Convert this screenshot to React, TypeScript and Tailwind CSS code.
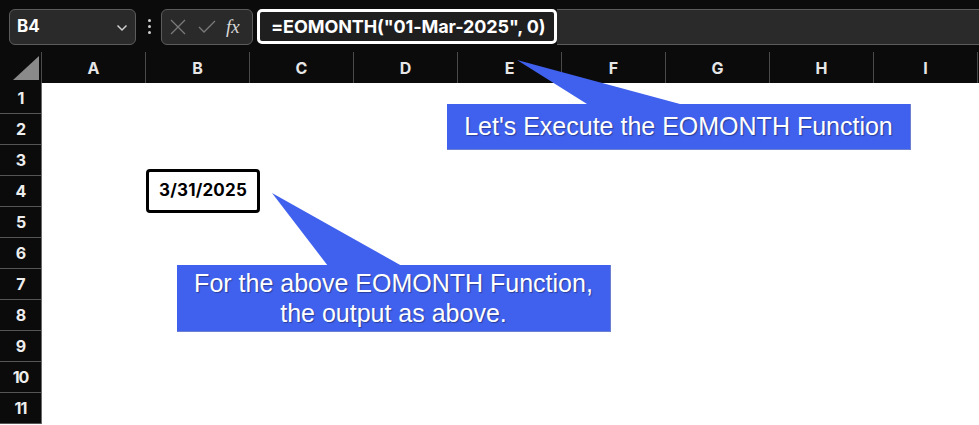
import React from "react";

const cols = ["A", "B", "C", "D", "E", "F", "G", "H", "I"];
const rows = [1, 2, 3, 4, 5, 6, 7, 8, 9, 10, 11];

const hdrFont = { fontFamily: "Inter, 'Open Sans', sans-serif" };
const calloutFont = {
  fontFamily: "'Liberation Sans', Arial, sans-serif",
  textShadow: "1px 1px 1px rgba(0,0,0,0.35)",
};

export default function App() {
  return (
    <div
      className="relative w-[979px] h-[425px] overflow-hidden bg-white"
      style={hdrFont}
    >
      {/* toolbar */}
      <div className="flex items-center h-[52px] bg-[#0b0b0b] pl-[9px] pt-[1px]">
        <div className="flex items-center justify-between w-[127px] h-[36px] rounded-[6px] border border-[#5c5c5c] bg-[#2a2a2a] pl-[7px] pr-[7px]">
          <span className="text-white font-bold text-[17px]">B4</span>
          <svg width="12" height="8" viewBox="0 0 12 8" className="mt-[2px]">
            <path d="M1.5 1.5 L6 6 L10.5 1.5" stroke="#d0d0d0" strokeWidth="1.5" fill="none" />
          </svg>
        </div>
        <div className="flex flex-col gap-[3px] ml-[12px] mr-[10px]">
          <span className="w-[3px] h-[3px] rounded-full bg-[#cfcfcf]" />
          <span className="w-[3px] h-[3px] rounded-full bg-[#cfcfcf]" />
          <span className="w-[3px] h-[3px] rounded-full bg-[#cfcfcf]" />
        </div>
        <div className="flex items-center w-[92px] h-[36px] rounded-[6px] border border-[#5c5c5c] bg-[#2a2a2a] pl-[8px]">
          <svg width="16" height="16" viewBox="0 0 16 16">
            <path d="M1 1 L15 15 M15 1 L1 15" stroke="#7a7a7a" strokeWidth="1.3" />
          </svg>
          <svg width="18" height="14" viewBox="0 0 18 14" className="ml-[12px]">
            <path d="M1 7 L6 12 L17 1" stroke="#7a7a7a" strokeWidth="1.3" fill="none" />
          </svg>
          <span
            className="ml-[10px] text-[#d8d8d8] italic text-[19px] leading-none"
            style={{ fontFamily: "'Liberation Serif', 'DejaVu Serif', serif" }}
          >
            fx
          </span>
        </div>
        <div className="flex flex-1 items-center h-[36px] ml-[4px]">
          <div className="flex items-center h-[35px] w-[300px] rounded-[5px] border-[3px] border-white bg-[#1f1f1f] pl-[11px]">
            <span className="text-white font-bold text-[18px] tracking-[-0.1px] whitespace-nowrap">
              =EOMONTH("01-Mar-2025", 0)
            </span>
          </div>
          <div className="flex-1 h-[36px] border-y border-[#5c5c5c] bg-[#2a2a2a]" />
        </div>
      </div>

      {/* column header */}
      <div className="flex h-[31px] bg-[#0b0b0b]">
        <div className="relative w-[42px] border-r border-[#4a4a4a]">
          <svg width="26" height="24" viewBox="0 0 26 24" className="absolute right-[2px] bottom-[3px]">
            <path d="M26 0 L26 24 L0 24 Z" fill="#8a8a8a" />
          </svg>
        </div>
        {cols.map((c) => (
          <div
            key={c}
            className="w-[104px] shrink-0 flex items-center justify-center border-r border-[#4a4a4a] text-[#e6e6e6] font-bold text-[16px]"
          >
            {c}
          </div>
        ))}
      </div>

      {/* body */}
      <div className="flex">
        <div className="w-[42px] bg-[#0b0b0b] border-r border-[#6a6a6a]">
          {rows.map((r) => (
            <div
              key={r}
              className="h-[31px] flex items-center justify-center border-b border-[#555] text-[#eeeeee] font-bold text-[16px] tracking-[-1px]"
            >
              {r}
            </div>
          ))}
        </div>
        <div className="flex-1 bg-white" />
      </div>

      {/* result cell */}
      <div className="absolute left-[146px] top-[169px] w-[114px] h-[44px] flex items-center justify-center rounded-[4px] border-[3px] border-black bg-white">
        <span className="text-black font-bold text-[17px] tracking-[0.2px]">3/31/2025</span>
      </div>

      {/* callout pointers */}
      <svg className="absolute left-0 top-0" width="979" height="425" viewBox="0 0 979 425">
        <path d="M517 60 L587 104 L680 104 Z" fill="#4061ee" />
        <path d="M272 193 L328 266 L402 266 Z" fill="#4061ee" />
      </svg>

      {/* callouts */}
      <div
        className="absolute left-[447px] top-[104px] w-[464px] h-[46px] flex items-center justify-center bg-[#4061ee] border-b border-r border-[#6d7fd0] text-white text-[25px]"
        style={calloutFont}
      >
        Let's Execute the EOMONTH Function
      </div>
      <div
        className="absolute left-[177px] top-[265px] w-[434px] h-[67px] flex flex-col items-center justify-center bg-[#4061ee] border-b border-r border-[#6d7fd0] text-white text-[25px] leading-[30px]"
        style={calloutFont}
      >
        <span>For the above EOMONTH Function,</span>
        <span>the output as above.</span>
      </div>
    </div>
  );
}
